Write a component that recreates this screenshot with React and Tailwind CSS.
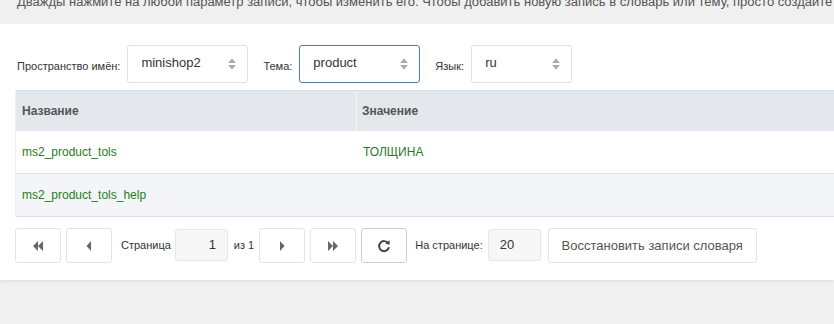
import React from 'react';

const font = { fontFamily: '"Liberation Sans", Arial, sans-serif' };

function SelectArrows() {
  return (
    <svg width="10" height="14" viewBox="0 0 10 14" className="shrink-0">
      <path d="M1 6 L5 1.5 L9 6 Z" fill="#aaa" />
      <path d="M1 8 L5 12.5 L9 8 Z" fill="#aaa" />
    </svg>
  );
}

function Select({ value, width, focused }) {
  return (
    <div
      className={`h-[38px] ${width} flex items-center justify-between pl-[13px] pr-[10px] rounded-[3px] bg-white border ${
        focused ? 'border-[#4a7fa6]' : 'border-[#e2e2e2]'
      }`}
    >
      <span className="text-[13px] text-[#333] -mt-[3px]">{value}</span>
      <SelectArrows />
    </div>
  );
}

function PagerButton({ children, dark }) {
  return (
    <button
      className={`h-[35px] w-[46px] flex items-center justify-center bg-white rounded-[3px] border ${
        dark ? 'border-[#cfcfcf]' : 'border-[#e4e4e4]'
      }`}
    >
      {children}
    </button>
  );
}

const iconFill = '#666';

export default function App() {
  return (
    <div className="w-[834px] h-[324px] overflow-hidden bg-[#f0f0f0] text-[#333]" style={font}>
      {/* hint strip, scrolled half out of view */}
      <div className="h-[24px] overflow-hidden pl-[17px]">
        <p className="-mt-[7px] leading-[18px] text-[13px] text-[#555] whitespace-nowrap">
          Дважды нажмите на любой параметр записи, чтобы изменить его. Чтобы добавить новую запись в словарь или тему, просто создайте её.
        </p>
      </div>

      <div className="h-[256px] bg-white shadow-[0_2px_3px_rgba(0,0,0,0.06)] pl-[15px] pt-[21px]">
        {/* filters */}
        <div className="flex items-center h-[38px]">
          <span className="text-[11px] text-[#333] ml-[2px] mr-[7px] mt-[4px]">Пространство имён:</span>
          <Select value="minishop2" width="w-[121px]" />
          <span className="text-[11px] text-[#333] ml-[15px] mr-[7px] mt-[4px]">Тема:</span>
          <Select value="product" width="w-[121px]" focused />
          <span className="text-[11px] text-[#333] ml-[15px] mr-[7px] mt-[4px]">Язык:</span>
          <Select value="ru" width="w-[101px]" />
        </div>

        {/* grid */}
        <div className="mt-[7px] w-[840px] border-l border-[#eef0f2]">
          <div className="flex h-[41px] bg-[#e4e8ec] border-t border-[#d5e0ea]">
            <div className="w-[341px] flex items-center pl-[6px] text-[12px] font-bold text-[#555] border-r border-[#f3f5f7]">
              Название
            </div>
            <div className="flex-1 flex items-center pl-[5px] text-[12px] font-bold text-[#555]">Значение</div>
          </div>
          <div className="flex h-[43px] bg-white border-b border-[#e2e2e2]">
            <div className="w-[341px] flex items-center pl-[6px] text-[12px] text-[#2b7a22]">ms2_product_tols</div>
            <div className="flex-1 flex items-center pl-[6px] text-[12px] text-[#2b7a22]">ТОЛЩИНА</div>
          </div>
          <div className="flex h-[43px] bg-[#f4f5f8] border-b border-[#e2e2e2]">
            <div className="w-[341px] flex items-center pl-[6px] text-[12px] text-[#2b7a22]">ms2_product_tols_help</div>
            <div className="flex-1" />
          </div>
        </div>

        {/* pager */}
        <div className="flex items-center mt-[11px] h-[35px]">
          <PagerButton>
            <svg width="14" height="10" viewBox="0 0 14 10">
              <path d="M7 0 L2 5 L7 10 Z M12 0 L7 5 L12 10 Z" fill={iconFill} />
            </svg>
          </PagerButton>
          <div className="w-[5px]" />
          <PagerButton>
            <svg width="8" height="10" viewBox="0 0 8 10">
              <path d="M6 0 L1.5 5 L6 10 Z" fill={iconFill} />
            </svg>
          </PagerButton>
          <span className="text-[11px] ml-[9px] mr-[4px]">Страница</span>
          <div className="h-[32px] w-[53px] bg-[#f7f7f7] border border-[#e6e6e6] rounded-[3px] flex items-center justify-end pr-[11px] text-[13px] -mt-[2px]">
            1
          </div>
          <span className="text-[11px] ml-[6px] mr-[5px]">из 1</span>
          <PagerButton>
            <svg width="8" height="10" viewBox="0 0 8 10">
              <path d="M2 0 L6.5 5 L2 10 Z" fill={iconFill} />
            </svg>
          </PagerButton>
          <div className="w-[5px]" />
          <PagerButton>
            <svg width="14" height="10" viewBox="0 0 14 10">
              <path d="M2 0 L7 5 L2 10 Z M7 0 L12 5 L7 10 Z" fill={iconFill} />
            </svg>
          </PagerButton>
          <div className="w-[5px]" />
          <PagerButton dark>
            <svg width="14" height="14" viewBox="0 0 14 14">
              <path
                d="M11.2 4.2 A5 5 0 1 0 12 8.3"
                fill="none"
                stroke="#444"
                strokeWidth="2"
              />
              <path d="M8.2 4.6 L12.6 1.2 L12.6 5.8 Z" fill="#444" />
            </svg>
          </PagerButton>
          <span className="text-[11px] ml-[8px] mr-[5px]">На странице:</span>
          <div className="h-[32px] w-[53px] bg-[#f7f7f7] border border-[#e6e6e6] rounded-[3px] flex items-center pl-[11px] text-[13px] -mt-[2px]">
            20
          </div>
          <button className="ml-[7px] h-[35px] w-[209px] bg-white border border-[#e4e4e4] rounded-[3px] text-[13px] text-[#555]">
            Восстановить записи словаря
          </button>
        </div>
      </div>
    </div>
  );
}
